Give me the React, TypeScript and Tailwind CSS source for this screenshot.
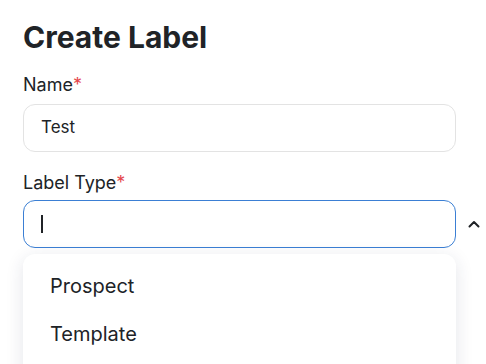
import React from "react";

export default function App() {
  return (
    <div className="w-[486px] h-[364px] overflow-hidden bg-white text-[#202327]" style={{ fontFamily: "Inter, 'Noto Sans', sans-serif" }}>
      <div className="pl-[23px] pt-[19px] w-[456px]">
        <h1 className="text-[30px] leading-[36px] font-bold">Create Label</h1>
        <div className="mt-[18px] text-[18px] leading-[24px]">
          Name<span className="text-[#e5484d]">*</span>
        </div>
        <div className="mt-[7px] h-[48px] rounded-[12px] border border-[#e3e3e3] flex items-center px-[17px] text-[17px]">
          Test
        </div>
        <div className="mt-[19px] text-[18px] leading-[24px]">
          Label Type<span className="text-[#e5484d]">*</span>
        </div>
        <div className="relative">
          <div className="mt-[5px] h-[48px] rounded-[12px] border border-[#3b7fd4] flex items-center px-[17px]">
            <div className="w-[2px] h-[18px] bg-[#202327]" />
          </div>
          <svg className="absolute left-[445px] top-[20px]" width="12" height="8" viewBox="0 0 12 8" fill="none">
            <path d="M1.5 6.5 L6 2 L10.5 6.5" stroke="#202327" strokeWidth="2" strokeLinecap="round" strokeLinejoin="round" />
          </svg>
          <div className="mt-[6px] h-[140px] rounded-[12px] bg-white shadow-[0_4px_18px_rgba(30,40,80,0.12)] pt-[8px] pl-[27px] text-[20px]">
            <div className="h-[48px] flex items-center">Prospect</div>
            <div className="h-[48px] flex items-center">Template</div>
          </div>
        </div>
      </div>
    </div>
  );
}
